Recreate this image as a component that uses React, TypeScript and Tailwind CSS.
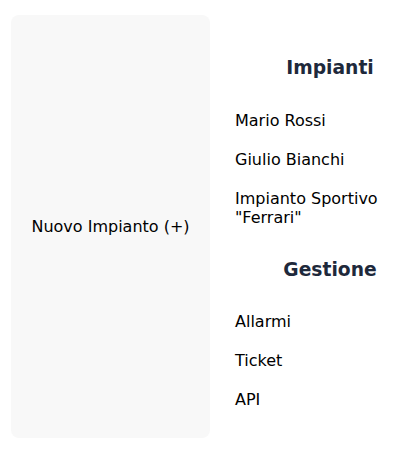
import React from "react";

const font = { fontFamily: '"DejaVu Sans", sans-serif' };

function Section({
  title,
  items,
  className = "",
  headClass = "mb-[19px]",
}: {
  title: string;
  items: string[];
  className?: string;
  headClass?: string;
}) {
  return (
    <div className={className}>
      <h2 className={`text-center text-[18.72px] leading-[28px] font-bold text-[#1e293b] pl-[47px] ${headClass}`}>{title}</h2>
      <ul>
        {items.map((it) => (
          <li key={it} className="py-[10px] text-[16px] leading-[19px] text-black">
            {it}
          </li>
        ))}
      </ul>
    </div>
  );
}

export default function App() {
  return (
    <div className="w-[402px] h-[451px] bg-white flex" style={font}>
      <div className="ml-[11px] mt-[15px] w-[199px] h-[423px] rounded-lg bg-[#f8f8f8] flex items-center justify-center text-[16px] text-black">
        Nuovo Impianto (+)
      </div>
      <div className="ml-[25px] w-[143px] pt-[54px] flex flex-col">
        <Section title="Impianti" items={["Mario Rossi", "Giulio Bianchi", 'Impianto Sportivo "Ferrari"']} />
        <Section
          title="Gestione"
          items={["Allarmi", "Ticket", "API"]}
          className="mt-[19px]"
          headClass="mb-[18px]"
        />
      </div>
    </div>
  );
}
